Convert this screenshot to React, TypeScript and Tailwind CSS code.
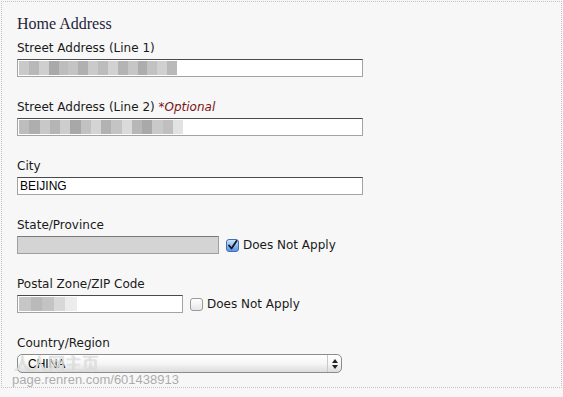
import type { ReactNode } from "react";

const LABEL = "text-[12px] leading-[15px] text-[#1a1a1a] [font-family:'DejaVu_Sans',sans-serif]";
const INPUT =
  "h-[18px] bg-white border border-[#a3a3a3] border-t-[#4a4a4a] flex items-center px-[2px] text-[12px] text-black [font-family:'Liberation_Sans',Arial,sans-serif]";

// pixelated blur blocks standing in for the hidden address text
const BLUR_1 = ["#c9c9c9", "#b8b8b8", "#cfcfcf", "#a9a9a9", "#bdbdbd", "#c4c4c4", "#b0b0b0", "#cacaca", "#bcbcbc", "#d2d2d2", "#b4b4b4", "#c6c6c6", "#adadad", "#c2c2c2", "#d0d0d0", "#b9b9b9"];
const BLUR_2 = ["#bdbdbd", "#aeaeae", "#c8c8c8", "#b5b5b5", "#cdcdcd", "#a8a8a8", "#c1c1c1", "#d4d4d4", "#b2b2b2", "#c4c4c4", "#dadada", "#b7b7b7", "#a9a9a9", "#c9c9c9", "#bfbfbf", "#e2e2e2"];

function Blur({ shades, width }: { shades: string[]; width: number }) {
  return (
    <div className="flex h-[14px] -ml-[1px] blur-[0.6px]" style={{ width }}>
      {shades.map((c, i) => (
        <div key={i} className="flex-1 h-full" style={{ background: c }} />
      ))}
    </div>
  );
}

function Field({ label, children, last }: { label: ReactNode; children: ReactNode; last?: boolean }) {
  return (
    <div className={last ? "" : "mb-[23px]"}>
      <div className={LABEL}>{label}</div>
      <div className="mt-[3px]">{children}</div>
    </div>
  );
}

function Check({ checked }: { checked?: boolean }) {
  if (checked) {
    return (
      <div className="w-[13px] h-[13px] rounded-[3px] border border-[#3f6fb6] bg-gradient-to-b from-[#cfe2fb] to-[#5b95e0] flex items-center justify-center">
        <svg width="11" height="11" viewBox="0 0 11 11">
          <path d="M2 5.5 L4.5 8.5 L9.5 1" fill="none" stroke="#101828" strokeWidth="1.8" strokeLinecap="round" strokeLinejoin="round" />
        </svg>
      </div>
    );
  }
  return <div className="w-[13px] h-[13px] rounded-[3px] border border-[#9a9a9a] bg-gradient-to-b from-white to-[#e6e6e6]" />;
}

export default function App() {
  return (
    <div className="w-[563px] h-[397px] bg-[#f7f7f7] p-[1px] relative overflow-hidden">
      <div className="h-[387px] w-[561px] border border-dotted border-[#c4c4c4] pl-[15px] pt-[12px]">
        <h2 className="text-[16px] leading-[20px] text-[#23233a] mb-[7px] [font-family:'Liberation_Serif',serif]">Home Address</h2>

        <Field label="Street Address (Line 1)">
          <div className={`${INPUT} w-[346px]`}>
            <Blur shades={BLUR_1} width={158} />
          </div>
        </Field>

        <Field
          label={
            <>
              Street Address (Line 2) <span className="italic text-[#7a1414]">*Optional</span>
            </>
          }
        >
          <div className={`${INPUT} w-[346px]`}>
            <Blur shades={BLUR_2} width={164} />
          </div>
        </Field>

        <Field label="City">
          <div className={`${INPUT} w-[346px]`}>BEIJING</div>
        </Field>

        <Field label="State/Province">
          <div className="flex items-center">
            <div className="w-[202px] h-[18px] bg-[#d4d4d4] border border-[#a0a0a0] border-t-[#7a7a7a]" />
            <div className="ml-[7px] mr-[4px]">
              <Check checked />
            </div>
            <span className={LABEL}>Does Not Apply</span>
          </div>
        </Field>

        <Field label="Postal Zone/ZIP Code">
          <div className="flex items-center">
            <div className={`${INPUT} w-[166px]`}>
              <Blur shades={["#c6c6c6", "#b9b9b9", "#c3c3c3", "#d8d8d8", "#ececec"]} width={58} />
            </div>
            <div className="ml-[7px] mr-[4px]">
              <Check />
            </div>
            <span className={LABEL}>Does Not Apply</span>
          </div>
        </Field>

        <Field label="Country/Region" last>
          <div className="w-[325px] h-[19px] rounded-[5px] border border-[#8c8c8c] bg-gradient-to-b from-white via-[#f6f6f6] to-[#dcdcdc] flex items-center">
            <span className="flex-1 pl-[10px] text-[12px] text-black [font-family:'Liberation_Sans',Arial,sans-serif]">CHINA</span>
            <div className="w-[14px] h-full border-l border-[#c8c8c8] flex items-center justify-center">
              <svg width="6" height="10" viewBox="0 0 6 10">
                <path d="M0 4 L3 0 L6 4 Z M0 6 L3 10 L6 6 Z" fill="#222" />
              </svg>
            </div>
          </div>
        </Field>
      </div>

      {/* renren watermark lying over the select */}
      <div className="absolute left-[14px] top-[354px] text-[17px] leading-[18px] text-[#f4f4f4]/70 [font-family:'Noto_Sans_CJK_SC',sans-serif] [text-shadow:0_0_1px_#b0b0b0]">
        人人网主页
      </div>
      <div className="absolute left-[12px] top-[373px] text-[13px] leading-[14px] text-[#ababab] [font-family:'Liberation_Sans',Arial,sans-serif] [text-shadow:0_0_1px_#ffffff]">
        page.renren.com/601438913
      </div>
    </div>
  );
}
